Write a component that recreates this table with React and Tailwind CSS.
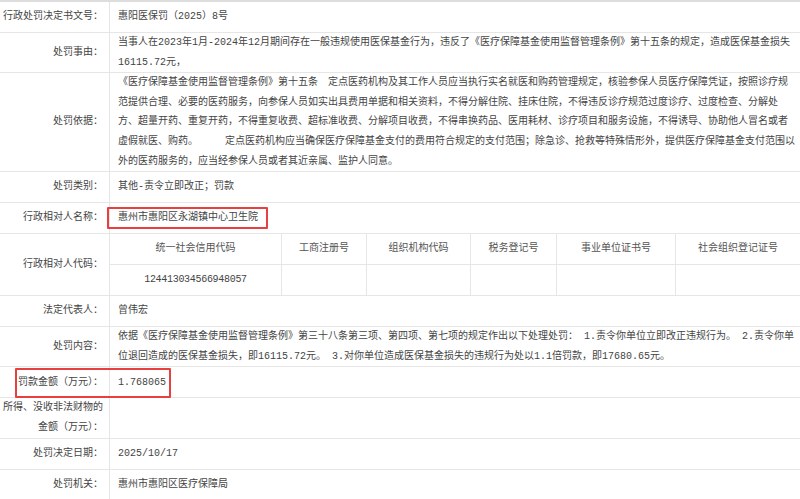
import React from "react";

const Row = ({ label, children, className = "", cellClass = "pl-[8px]" }) => (
	<div className={`relative flex border-b border-[#e6e6e6] ${className}`}>
		<div className="w-[110px] shrink-0 flex items-center justify-end pr-[6px] text-right border-r border-[#e6e6e6] min-h-[30px] leading-[19.6px]">
			{label}
		</div>
		<div className={`flex-1 min-w-0 flex items-center min-h-[30px] leading-[19.6px] overflow-hidden ${cellClass}`}>
			{children}
		</div>
	</div>
);

const Lines = ({ lines }) => (
	<div className="flex flex-col">
		{lines.map((l, i) => (
			<div key={i} className="whitespace-nowrap">
				{l}
			</div>
		))}
	</div>
);

const codeHeads = [
	"统一社会信用代码",
	"工商注册号",
	"组织机构代码",
	"税务登记号",
	"事业单位证书号",
	"社会组织登记证号",
];

const App = () => {
	return (
		<div className="w-[800px] h-[499px] overflow-hidden bg-white border-t-2 border-[#dddddd] text-[10px] text-[#444444] font-['Liberation_Mono','Noto_Sans_CJK_SC',monospace]">
			<Row label="行政处罚决定书文号：">惠阳医保罚（2025）8号</Row>

			<Row label="处罚事由：">
				<Lines
					lines={[
						"当事人在2023年1月-2024年12月期间存在一般违规使用医保基金行为，违反了《医疗保障基金使用监督管理条例》第十五条的规定，造成医保基金损失",
						"16115.72元，",
					]}
				/>
			</Row>

			<Row label="处罚依据：">
				<Lines
					lines={[
						"《医疗保障基金使用监督管理条例》第十五条　定点医药机构及其工作人员应当执行实名就医和购药管理规定，核验参保人员医疗保障凭证，按照诊疗规",
						"范提供合理、必要的医药服务，向参保人员如实出具费用单据和相关资料，不得分解住院、挂床住院，不得违反诊疗规范过度诊疗、过度检查、分解处",
						"方、超量开药、重复开药，不得重复收费、超标准收费、分解项目收费，不得串换药品、医用耗材、诊疗项目和服务设施，不得诱导、协助他人冒名或者",
						<>
							虚假就医、购药。<span className="inline-block w-[27px]" />
							定点医药机构应当确保医疗保障基金支付的费用符合规定的支付范围；除急诊、抢救等特殊情形外，提供医疗保障基金支付范围以
						</>,
						"外的医药服务的，应当经参保人员或者其近亲属、监护人同意。",
					]}
				/>
			</Row>

			<Row label="处罚类别：">其他-责令立即改正；罚款</Row>

			<Row label="行政相对人名称：">
				惠州市惠阳区永湖镇中心卫生院
				<div className="absolute left-[107px] top-[4px] w-[161px] h-[22px] border-2 border-[#e8403f] rounded-[1px]" />
			</Row>

			<Row label="行政相对人代码：" cellClass="">
				<div className="w-full">
					<div className="grid grid-cols-[172px_85px_104px_86px_119px_1fr] border-b border-[#e6e6e6] text-[#555555]">
						{codeHeads.map((h, i) => (
							<div
								key={h}
								className={`min-h-[30px] flex items-center justify-center ${i < 5 ? "border-r border-[#e6e6e6]" : ""}`}>
								{h}
							</div>
						))}
					</div>
					<div className="grid grid-cols-[172px_85px_104px_86px_119px_1fr]">
						<div className="min-h-[30px] flex items-center justify-center border-r border-[#e6e6e6] tracking-[-0.3px]">
							124413034566948057
						</div>
						<div className="border-r border-[#e6e6e6]" />
						<div className="border-r border-[#e6e6e6]" />
						<div className="border-r border-[#e6e6e6]" />
						<div className="border-r border-[#e6e6e6]" />
						<div />
					</div>
				</div>
			</Row>

			<Row label="法定代表人：">曾伟宏</Row>

			<Row label="处罚内容：">
				<Lines
					lines={[
						"依据《医疗保障基金使用监督管理条例》第三十八条第三项、第四项、第七项的规定作出以下处理处罚： 1.责令你单位立即改正违规行为。 2.责令你单",
						"位退回造成的医保基金损失，即16115.72元。 3.对你单位造成医保基金损失的违规行为处以1.1倍罚款，即17680.65元。",
					]}
				/>
			</Row>

			<Row label="罚款金额（万元）：">
				1.768065
				<div className="absolute left-[15px] top-[1px] w-[156px] h-[30px] border-2 border-[#e8403f] rounded-[1px]" />
			</Row>

			<Row
				label={
					<div className="flex flex-col items-end whitespace-nowrap">
						<span>所得、没收非法财物的</span>
						<span>金额（万元）：</span>
					</div>
				}
			/>

			<Row label="处罚决定日期：">2025/10/17</Row>

			<Row label="处罚机关：">惠州市惠阳区医疗保障局</Row>
		</div>
	);
};

export default App;
